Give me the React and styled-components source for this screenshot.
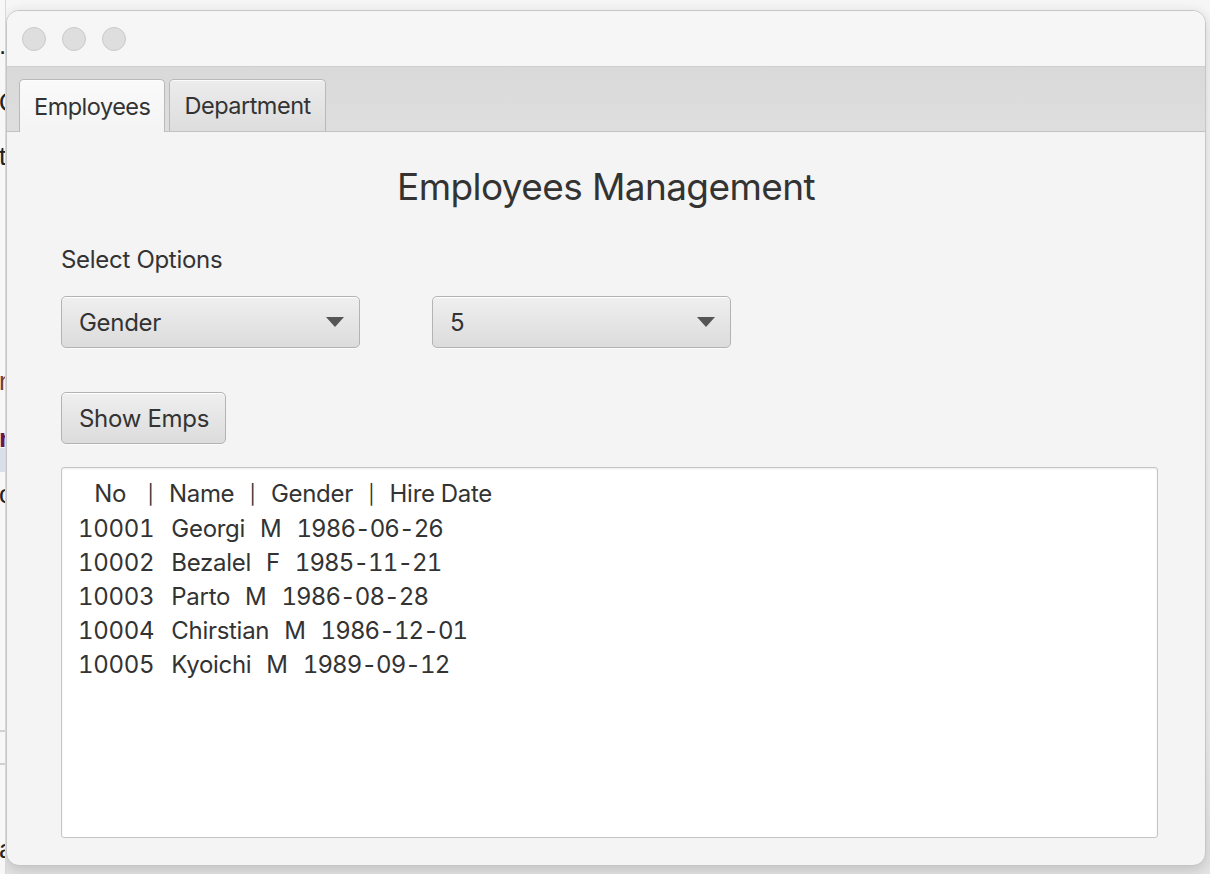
import React from "react";
import styled, {createGlobalStyle} from "styled-components";

const GlobalStyle = createGlobalStyle`
    html, body {
        margin: 0;
        padding: 0;
        background: #f1f1f1;
        font-family: Inter, "Noto Sans", "Liberation Sans", sans-serif;
        color: #333333;
    }
`;

const header = ["No", "Name", "Gender", "Hire Date"];

const employees = [
    ["10001", "Georgi", "M", "1986-06-26"],
    ["10002", "Bezalel", "F", "1985-11-21"],
    ["10003", "Parto", "M", "1986-08-28"],
    ["10004", "Chirstian", "M", "1986-12-01"],
    ["10005", "Kyoichi", "M", "1989-09-12"],
];

const backdrop = [
    {top: 30, text: ".", color: "#222"},
    {top: 87, text: "Q", color: "#222"},
    {top: 141, text: "t", color: "#222"},
    {top: 366, text: "m", color: "#7a3b3b"},
    {top: 423, text: "n", color: "#6b1650", bold: true},
    {top: 479, text: "o", color: "#222"},
    {top: 834, text: "a", color: "#222"},
];

export default function App() {
    return (
        <Desktop>
            <GlobalStyle/>
            <BackStrip>
                <BackBand/>
                {backdrop.map((line) => (
                    <BackLine key={line.top} $top={line.top} $color={line.color} $bold={line.bold}>
                        {line.text}
                    </BackLine>
                ))}
                <BackRule $top={730}/>
                <BackRule $top={763}/>
            </BackStrip>
            <Window>
                <TitleBar>
                    <Light/>
                    <Light/>
                    <Light/>
                </TitleBar>
                <TabHeader>
                    <Tab $selected>Employees</Tab>
                    <Tab>Department</Tab>
                </TabHeader>
                <Content>
                    <Heading>Employees Management</Heading>
                    <Label>Select Options</Label>
                    <ComboRow>
                        <Combo>
                            <span>Gender</span>
                            <Arrow/>
                        </Combo>
                        <Combo>
                            <span>5</span>
                            <Arrow/>
                        </Combo>
                    </ComboRow>
                    <Button>Show Emps</Button>
                    <TextArea>
                        <HeaderLine>
                            {"  "}
                            {header.map((col, i) => (
                                <React.Fragment key={col}>
                                    {i > 0 && <>{i === 1 ? "   " : "  "}<Pipe>|</Pipe>{"  "}</>}
                                    {col}
                                </React.Fragment>
                            ))}
                        </HeaderLine>
                        {employees.map(([no, name, gender, date]) => (
                            <Line key={no}>
                                <Cell $gap={17}>{no}</Cell>
                                <Cell $gap={15}>{name}</Cell>
                                <Cell $gap={15}>{gender}</Cell>
                                <DateText>{date}</DateText>
                            </Line>
                        ))}
                    </TextArea>
                </Content>
            </Window>
        </Desktop>
    );
}

const Desktop = styled.div`
    width: 1210px;
    height: 874px;
    display: flex;
    align-items: flex-start;
    padding-top: 10px;
    box-sizing: border-box;
    overflow: hidden;
    background: linear-gradient(#f6f6f6 0%, #f3f3f3 80%, #e4e4e4 100%);
`;

const BackStrip = styled.div`
    position: relative;
    width: 6px;
    height: 874px;
    margin-top: -10px;
    flex-shrink: 0;
    overflow: hidden;
    background: #f7f7f7;
    border-right: 1px solid #d8d8d8;
    box-sizing: border-box;
`;

const BackLine = styled.div`
    position: absolute;
    left: -1px;
    top: ${({$top}) => $top}px;
    font-family: "Liberation Sans", Arial, sans-serif;
    font-size: 26px;
    line-height: 30px;
    font-weight: ${({$bold}) => $bold ? 700 : 400};
    color: ${({$color}) => $color};
`;

const BackBand = styled.div`
    position: absolute;
    left: 0;
    right: 0;
    top: 448px;
    height: 24px;
    background: #d9dee8;
`;

const BackRule = styled.div`
    position: absolute;
    left: 0;
    right: 0;
    top: ${({$top}) => $top}px;
    height: 2px;
    background: #d0d0d0;
`;

const Window = styled.div`
    width: 1200px;
    height: 856px;
    flex-shrink: 0;
    display: flex;
    flex-direction: column;
    border-radius: 13px;
    overflow: hidden;
    background: #f4f4f4;
    border: 1px solid #c6c6c6;
    box-sizing: border-box;
    box-shadow: 0 4px 14px rgba(0, 0, 0, 0.16);
`;

const TitleBar = styled.div`
    height: 55px;
    flex-shrink: 0;
    display: flex;
    align-items: center;
    gap: 16px;
    padding-left: 15px;
    background: #f6f6f6;
    border-bottom: 1px solid #cfcfcf;
`;

const Light = styled.div`
    width: 22px;
    height: 22px;
    border-radius: 50%;
    background: #dedede;
    border: 1px solid #cacaca;
`;

const TabHeader = styled.div`
    height: 65px;
    flex-shrink: 0;
    display: flex;
    align-items: flex-end;
    gap: 4px;
    padding-left: 12px;
    background: linear-gradient(#d9d9d9, #dedede);
    border-bottom: 1px solid #c2c2c2;
    box-sizing: border-box;
`;

const Tab = styled.div`
    padding: 0 14px;
    display: flex;
    align-items: center;
    font-size: 23.5px;
    letter-spacing: -0.5px;
    color: #333;
    border: 1px solid #b9b9b9;
    border-bottom: none;
    border-radius: 5px 5px 0 0;
    box-sizing: border-box;
    background: ${({$selected}) => $selected
        ? "linear-gradient(#fafafa, #f4f4f4)"
        : "linear-gradient(#ececec, #dddddd)"};
    margin-bottom: ${({$selected}) => $selected ? "-1px" : "0"};
    height: ${({$selected}) => $selected ? "53px" : "52px"};
    box-shadow: inset 0 1px 0 rgba(255, 255, 255, 0.8);
`;

const Content = styled.div`
    flex: 1;
    display: flex;
    flex-direction: column;
    align-items: flex-start;
    padding: 0 0 0 54px;
`;

const Heading = styled.h1`
    align-self: stretch;
    margin: 33px 54px 0 0;
    text-align: center;
    font-size: 37px;
    line-height: 44px;
    font-weight: 400;
    letter-spacing: -0.6px;
    color: #333;
`;

const Label = styled.div`
    margin-top: 36px;
    font-size: 24px;
    line-height: 30px;
    letter-spacing: -0.3px;
    color: #333;
`;

const ComboRow = styled.div`
    display: flex;
    gap: 72px;
    margin-top: 21px;
`;

const Control = styled.div`
    height: 52px;
    display: flex;
    align-items: center;
    padding: 0 17px;
    box-sizing: border-box;
    white-space: nowrap;
    font-size: 24px;
    letter-spacing: -0.3px;
    color: #333;
    border: 1px solid #b3b3b3;
    border-radius: 5px;
    background: linear-gradient(#efefef, #dcdcdc);
    box-shadow: inset 0 1px 0 rgba(255, 255, 255, 0.9), 0 1px 0 rgba(255, 255, 255, 0.6);
`;

const Combo = styled(Control)`
    width: 299px;
    justify-content: space-between;
`;

const Arrow = styled.span`
    width: 0;
    height: 0;
    border-left: 9px solid transparent;
    border-right: 9px solid transparent;
    border-top: 10px solid #555;
    margin-right: -2px;
`;

const Button = styled(Control)`
    margin-top: 44px;
    width: 165px;
`;

const TextArea = styled.div`
    margin-top: 23px;
    width: 1097px;
    height: 371px;
    box-sizing: border-box;
    padding: 9px 16px;
    background: #ffffff;
    border: 1px solid #c4c4c4;
    border-radius: 3px;
    box-shadow: inset 0 1px 2px rgba(0, 0, 0, 0.08);
`;

const Line = styled.div`
    white-space: pre;
    font-size: 24px;
    line-height: 34px;
    letter-spacing: -0.3px;
    font-variant-numeric: tabular-nums;
    color: #333;
`;

const HeaderLine = styled(Line)`
    padding-left: 4px;
`;

const Cell = styled.span`
    margin-right: ${({$gap}) => $gap}px;
`;

const DateText = styled.span`
    letter-spacing: -0.9px;
`;

const Pipe = styled.span`
    display: inline-block;
    margin: 0 3px;
    font-size: 19px;
    vertical-align: 1px;
`;
